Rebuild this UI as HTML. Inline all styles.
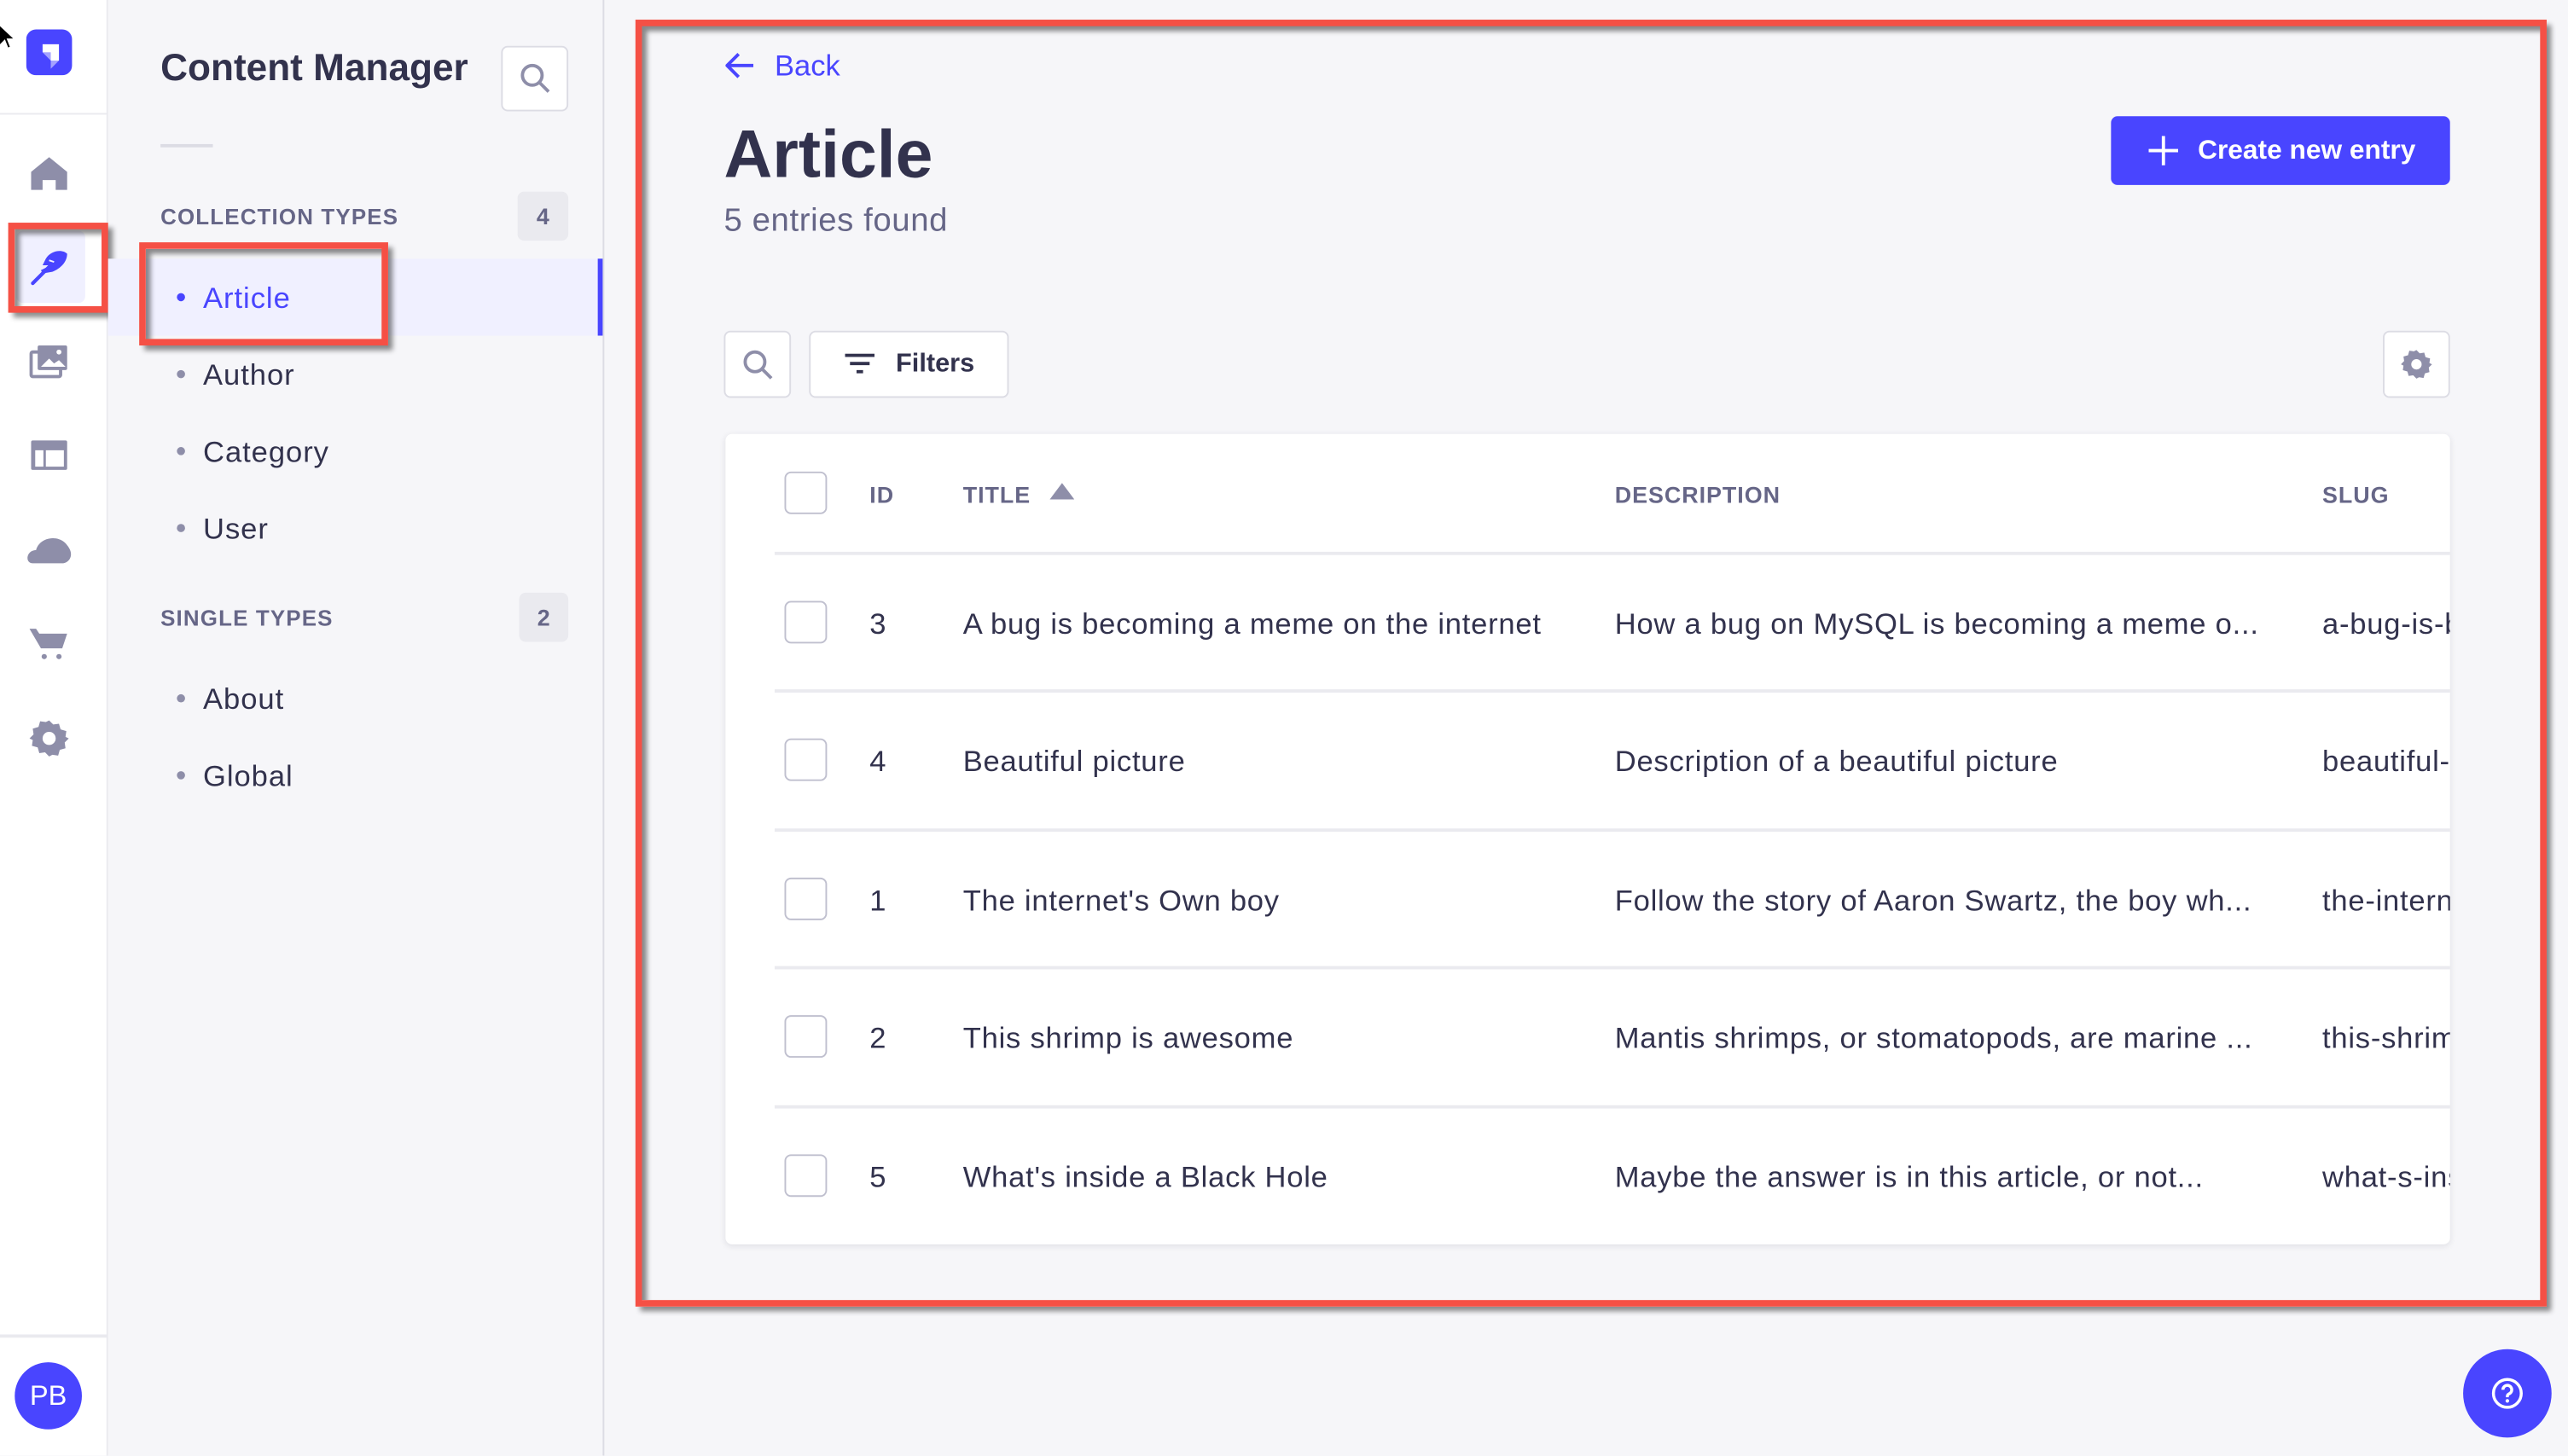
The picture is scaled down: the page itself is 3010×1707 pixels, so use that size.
<!DOCTYPE html>
<html><head><meta charset="utf-8">
<style>
*{margin:0;padding:0;box-sizing:border-box}
html,body{width:3010px;height:1706px;overflow:hidden;background:#f6f6f9}
#s{position:absolute;left:0;top:0;width:1568px;height:889px;transform:scale(1.9196);transform-origin:0 0;font-family:"Liberation Sans",sans-serif;color:#32324d;background:#f6f6f9}
.a{position:absolute}
.t{position:absolute;white-space:nowrap}
.ic{position:absolute;left:18px}
.cb{position:absolute;left:479px;width:26px;height:26px;border:1.5px solid #c0c0cf;border-radius:4px;background:#fff}
.row{font-size:18px;color:#32324d;letter-spacing:.4px;margin-top:1px}
.hd{font-size:14px;font-weight:bold;color:#666687;letter-spacing:.5px}
.div{position:absolute;left:473px;width:1023px;height:2px;background:#eaeaef}
.red{position:absolute;border:4px solid #f55045;box-shadow:3px 3px 3px rgba(0,0,0,.45), inset 3px 3px 3px rgba(0,0,0,.45)}
.nav{font-size:18px;color:#32324d;letter-spacing:.5px;margin-top:1px}
.bul{position:absolute;left:108px;width:5px;height:5px;border-radius:50%;background:#8e8ea9}
.btn{position:absolute;background:#fff;border:1px solid #dcdce4;border-radius:4px}
</style></head><body>
<div id="s">
<div class="a" style="left:0;top:0;width:66px;height:889px;background:#fff;border-right:1px solid #eaeaef"></div>
<div class="a" style="left:0;top:69px;width:66px;height:1px;background:#eaeaef"></div>
<div class="a" style="left:0;top:815px;width:66px;height:2px;background:#eaeaef"></div>
<svg class="a" style="left:16px;top:18px" width="28" height="28" viewBox="0 0 28 28"><rect width="28" height="28" rx="6" fill="#4945ff"/><path d="M10 9h10v10h-5v-5h-5z" fill="#fff"/><path d="M10 14h5v5z" fill="#fff" opacity=".5"/><path d="M15 19h5l-5 5z" fill="#fff" opacity=".5"/></svg>
<svg class="ic" style="top:95px" width="24" height="22" viewBox="0 0 24 22"><path d="M12 1 L23 10 V21 H16 V15 H8 V21 H1 V10 Z" fill="#8e8ea9"/></svg>
<div class="a" style="left:10px;top:141px;width:42px;height:44px;background:#f0f0ff;border-radius:4px"></div>
<svg class="ic" style="top:151px" width="24" height="24" viewBox="0 0 24 24"><path d="M23 4c-3-3-10-2-13 3l-2 4h5l-6 3 1 2 6-1c5-2 9-6 9-11z" fill="#4945ff"/><path d="M2 22 L15 9" stroke="#4945ff" stroke-width="2.2" stroke-linecap="round"/><path d="M12 8l3 1" stroke="#f0f0ff" stroke-width="1"/></svg>
<svg class="ic" style="top:210px" width="24" height="22" viewBox="0 0 24 22"><rect x="1" y="5" width="18" height="15" rx="1" fill="none" stroke="#8e8ea9" stroke-width="2"/><rect x="5" y="1" width="18" height="15" rx="1" fill="#8e8ea9"/><path d="M7 14l5-5 3 3 3-2 4 4z" fill="#fff"/><circle cx="18" cy="5" r="1.5" fill="#fff"/></svg>
<svg class="ic" style="top:268px" width="24" height="20" viewBox="0 0 24 20"><rect x="1" y="1" width="22" height="18" rx="1" fill="#8e8ea9"/><rect x="3.5" y="7" width="5" height="10" fill="#fff"/><rect x="10" y="7" width="11" height="10" fill="#fff"/></svg>
<svg class="a" style="left:16px;top:325px" width="28" height="20" viewBox="0 0 28 20"><path d="M4 19 C-1 19 0 11 6 11 C8 3 20 1 25 8 C30 14 26 19 22 19 Z" fill="#8e8ea9"/></svg>
<svg class="ic" style="top:382px" width="24" height="22" viewBox="0 0 24 22"><path d="M0 2h4l2 3h17l-3 9H7z" fill="#8e8ea9"/><circle cx="9" cy="19" r="1.6" fill="#8e8ea9"/><circle cx="18" cy="19" r="1.6" fill="#8e8ea9"/></svg>
<svg class="ic" style="top:439px" width="24" height="24" viewBox="0 0 24 24"><path d="M12 1l2.5 2.5 3.5-.5 1 3.5 3.5 1-.5 3.5L24 12l-2.5 2.5.5 3.5-3.5 1-1 3.5-3.5-.5L12 23l-2.5-2.5-3.5.5-1-3.5-3.5-1 .5-3.5L0 12l2.5-2.5L2 6l3.5-1 1-3.5 3.5.5z" fill="#8e8ea9"/><circle cx="12" cy="12" r="4" fill="#fff"/></svg>
<div class="a" style="left:9px;top:832px;width:41px;height:41px;border-radius:50%;background:#4945ff;color:#fff;font-size:17px;text-align:center;line-height:41px">PB</div>
<div class="red" style="left:5px;top:136px;width:61px;height:55px;background:transparent"></div>

<div class="a" style="left:368px;top:0;width:1px;height:889px;background:#dcdce4"></div>
<div class="t" style="left:98px;top:28px;font-size:23px;font-weight:bold">Content Manager</div>
<div class="btn" style="left:306px;top:28px;width:41px;height:40px"></div>
<svg class="a" style="left:317px;top:38px" width="20" height="20" viewBox="0 0 20 20"><circle cx="8" cy="8" r="6" fill="none" stroke="#8e8ea9" stroke-width="2"/><path d="M12.5 12.5L18 18" stroke="#8e8ea9" stroke-width="2"/></svg>
<div class="a" style="left:98px;top:88px;width:32px;height:2px;background:#dcdce4"></div>
<div class="t" style="left:98px;top:125px;font-size:13.5px;font-weight:bold;color:#666687;letter-spacing:.6px">COLLECTION TYPES</div>
<div class="a" style="left:316px;top:117px;width:31px;height:30px;background:#eaeaef;border-radius:4px;font-size:14px;font-weight:bold;color:#666687;text-align:center;line-height:30px">4</div>
<div class="a" style="left:66px;top:158px;width:302px;height:47px;background:#f0f0ff"></div>
<div class="a" style="left:365px;top:158px;width:3px;height:47px;background:#4945ff"></div>
<div class="bul" style="top:179px;background:#4945ff"></div><div class="t nav" style="left:124px;top:171px;color:#4945ff">Article</div>
<div class="bul" style="top:226px"></div><div class="t nav" style="left:124px;top:218px">Author</div>
<div class="bul" style="top:273px"></div><div class="t nav" style="left:124px;top:265px">Category</div>
<div class="bul" style="top:320px"></div><div class="t nav" style="left:124px;top:312px">User</div>
<div class="t" style="left:98px;top:370px;font-size:13.5px;font-weight:bold;color:#666687;letter-spacing:.6px">SINGLE TYPES</div>
<div class="a" style="left:317px;top:362px;width:30px;height:30px;background:#eaeaef;border-radius:4px;font-size:14px;font-weight:bold;color:#666687;text-align:center;line-height:30px">2</div>
<div class="bul" style="top:424px"></div><div class="t nav" style="left:124px;top:416px">About</div>
<div class="bul" style="top:471px"></div><div class="t nav" style="left:124px;top:463px">Global</div>
<div class="red" style="left:85px;top:148px;width:152px;height:63px"></div>

<svg class="a" style="left:443px;top:32px" width="18" height="16" viewBox="0 0 18 16"><path d="M17 8H2M8 1L1 8l7 7" fill="none" stroke="#4945ff" stroke-width="2"/></svg>
<div class="t" style="left:473px;top:30px;font-size:18px;color:#4945ff">Back</div>
<div class="t" style="left:442px;top:71px;font-size:41px;font-weight:bold">Article</div>
<div class="t" style="left:442px;top:124px;font-size:20px;color:#666687;letter-spacing:.3px">5 entries found</div>
<div class="a" style="left:1289px;top:71px;width:207px;height:42px;background:#4945ff;border-radius:4px"></div>
<svg class="a" style="left:1312px;top:83px" width="18" height="18" viewBox="0 0 18 18"><path d="M9 0v18M0 9h18" stroke="#fff" stroke-width="2"/></svg>
<div class="t" style="left:1342px;top:83px;font-size:16.5px;font-weight:bold;color:#fff">Create new entry</div>
<div class="btn" style="left:442px;top:202px;width:41px;height:41px"></div>
<svg class="a" style="left:453px;top:213px" width="20" height="20" viewBox="0 0 20 20"><circle cx="8" cy="8" r="6" fill="none" stroke="#8e8ea9" stroke-width="2"/><path d="M12.5 12.5L18 18" stroke="#8e8ea9" stroke-width="2"/></svg>
<div class="btn" style="left:494px;top:202px;width:122px;height:41px"></div>
<svg class="a" style="left:516px;top:216px" width="18" height="13" viewBox="0 0 18 13"><path d="M0 1h18M3 6h12M7 11h4" stroke="#32324d" stroke-width="2"/></svg>
<div class="t" style="left:547px;top:214px;font-size:16px;font-weight:bold">Filters</div>
<div class="btn" style="left:1455px;top:202px;width:41px;height:41px"></div>
<svg class="a" style="left:1466px;top:213px" width="19" height="19" viewBox="0 0 24 24"><path d="M12 1l2.5 2.5 3.5-.5 1 3.5 3.5 1-.5 3.5L24 12l-2.5 2.5.5 3.5-3.5 1-1 3.5-3.5-.5L12 23l-2.5-2.5-3.5.5-1-3.5-3.5-1 .5-3.5L0 12l2.5-2.5L2 6l3.5-1 1-3.5 3.5.5z" fill="#8e8ea9"/><circle cx="12" cy="12" r="4" fill="#fff"/></svg>

<div class="a" style="left:443px;top:265px;width:1053px;height:495px;background:#fff;border-radius:4px;box-shadow:0 1px 4px rgba(33,33,52,.1);overflow:hidden"></div>
<div class="cb" style="top:288px"></div>
<div class="t hd" style="left:531px;top:294px">ID</div>
<div class="t hd" style="left:588px;top:294px">TITLE</div>
<svg class="a" style="left:641px;top:295px" width="15" height="10" viewBox="0 0 15 10"><path d="M7.5 0L15 10H0z" fill="#8e8ea9"/></svg>
<div class="t hd" style="left:986px;top:294px">DESCRIPTION</div>
<div class="t hd" style="left:1418px;top:294px">SLUG</div>

<div class="div" style="top:337px"></div>
<div class="div" style="top:421px"></div>
<div class="div" style="top:506px"></div>
<div class="div" style="top:590px"></div>
<div class="div" style="top:675px"></div>

<div class="cb" style="top:367px"></div><div class="t row" style="left:531px;top:370px">3</div><div class="t row" style="left:588px;top:370px">A bug is becoming a meme on the internet</div><div class="t row" style="left:986px;top:370px">How a bug on MySQL is becoming a meme o...</div>
<div class="cb" style="top:451px"></div><div class="t row" style="left:531px;top:454px">4</div><div class="t row" style="left:588px;top:454px">Beautiful picture</div><div class="t row" style="left:986px;top:454px">Description of a beautiful picture</div>
<div class="cb" style="top:536px"></div><div class="t row" style="left:531px;top:539px">1</div><div class="t row" style="left:588px;top:539px">The internet's Own boy</div><div class="t row" style="left:986px;top:539px">Follow the story of Aaron Swartz, the boy wh...</div>
<div class="cb" style="top:620px"></div><div class="t row" style="left:531px;top:623px">2</div><div class="t row" style="left:588px;top:623px">This shrimp is awesome</div><div class="t row" style="left:986px;top:623px">Mantis shrimps, or stomatopods, are marine ...</div>
<div class="cb" style="top:705px"></div><div class="t row" style="left:531px;top:708px">5</div><div class="t row" style="left:588px;top:708px">What's inside a Black Hole</div><div class="t row" style="left:986px;top:708px">Maybe the answer is in this article, or not...</div>
<div class="a" style="left:1418px;top:265px;width:78px;height:495px;overflow:hidden">
 <div class="t row" style="left:0;top:105px">a-bug-is-becoming</div>
 <div class="t row" style="left:0;top:189px">beautiful-picture</div>
 <div class="t row" style="left:0;top:274px">the-internet-s-own</div>
 <div class="t row" style="left:0;top:358px">this-shrimp-is</div>
 <div class="t row" style="left:0;top:443px">what-s-inside</div>
</div>

<div class="red" style="left:388px;top:12px;width:1167px;height:786px"></div>

<div class="a" style="left:1504px;top:824px;width:54px;height:54px;border-radius:50%;background:#4945ff"></div>
<svg class="a" style="left:1521px;top:841px" width="20" height="20" viewBox="0 0 20 20"><circle cx="10" cy="10" r="8.5" fill="none" stroke="#fff" stroke-width="1.8"/><path d="M7.3 7.8a2.7 2.7 0 1 1 3.7 2.5c-.7.3-1 .8-1 1.5v.6" fill="none" stroke="#fff" stroke-width="1.8"/><circle cx="10" cy="14.6" r="1.1" fill="#fff"/></svg>
<svg class="a" style="left:0;top:16px" width="8" height="14" viewBox="0 0 8 14"><path d="M0 0v11l3-3 2 5 1-.5-2-5h4z" fill="#000"/></svg>
</div>
</body></html>
